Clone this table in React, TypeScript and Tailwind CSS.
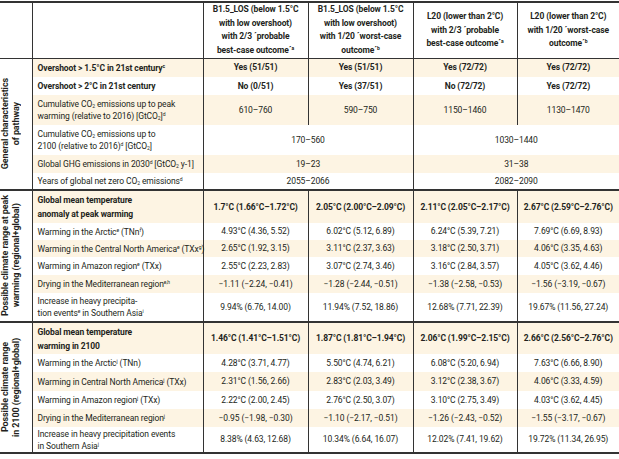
import React from 'react';

type Row = {
  label: React.ReactNode;
  vals: string[];
  bold?: boolean;
  beige?: boolean;
  h: string;
  merged?: boolean;
};

const sup = (s: string) => <sup className="text-[5px] -top-[3px]">{s}</sup>;
const co2 = <>CO<sub className="text-[5px]">2</sub></>;

const block1: Row[] = [
  { label: <>Overshoot &gt; 1.5°C in 21st century{sup('c')}</>, vals: ['Yes (51/51)', 'Yes (51/51)', 'Yes (72/72)', 'Yes (72/72)'], bold: true, beige: true, h: 'h-[19px]' },
  { label: 'Overshoot > 2°C in 21st century', vals: ['No (0/51)', 'Yes (37/51)', 'No (72/72)', 'Yes (72/72)'], bold: true, h: 'h-[18px]' },
  { label: <>Cumulative {co2} emissions up to peak<br />warming (relative to 2016) [Gt{co2}]{sup('d')}</>, vals: ['610–760', '590–750', '1150–1460', '1130–1470'], beige: true, h: 'h-[30px]' },
  { label: <>Cumulative {co2} emissions up to<br />2100 (relative to 2016){sup('d')} [Gt{co2}]</>, vals: ['170–560', '1030–1440'], merged: true, h: 'h-[30px]' },
  { label: <>Global GHG emissions in 2030{sup('d')} [Gt{co2} y-1]</>, vals: ['19–23', '31–38'], merged: true, beige: true, h: 'h-[18px]' },
  { label: <>Years of global net zero {co2} emissions{sup('d')}</>, vals: ['2055–2066', '2082–2090'], merged: true, h: 'h-[17px]' },
];

const block2: Row[] = [
  { label: <>Global mean temperature<br />anomaly at peak warming</>, vals: ['1.7°C (1.66°C–1.72°C)', '2.05°C (2.00°C–2.09°C)', '2.11°C (2.05°C–2.17°C)', '2.67°C (2.59°C–2.76°C)'], bold: true, beige: true, h: 'h-[33px]' },
  { label: <>Warming in the Arctic{sup('e')} (TNn{sup('f')})</>, vals: ['4.93°C (4.36, 5.52)', '6.02°C (5.12, 6.89)', '6.24°C (5.39, 7.21)', '7.69°C (6.69, 8.93)'], h: 'h-[17px]' },
  { label: <>Warming in the Central North America{sup('e')} (TXx{sup('g')})</>, vals: ['2.65°C (1.92, 3.15)', '3.11°C (2.37, 3.63)', '3.18°C (2.50, 3.71)', '4.06°C (3.35, 4.63)'], beige: true, h: 'h-[17px]' },
  { label: <>Warming in Amazon region{sup('e')} (TXx)</>, vals: ['2.55°C (2.23, 2.83)', '3.07°C (2.74, 3.46)', '3.16°C (2.84, 3.57)', '4.05°C (3.62, 4.46)'], h: 'h-[18px]' },
  { label: <>Drying in the Mediterranean region{sup('e,h')}</>, vals: ['−1.11 (−2.24, −0.41)', '−1.28 (−2.44, −0.51)', '−1.38 (−2.58, −0.53)', '−1.56 (−3.19, −0.67)'], beige: true, h: 'h-[18px]' },
  { label: <>Increase in heavy precipita-<br />tion events{sup('e')} in Southern Asia{sup('i')}</>, vals: ['9.94% (6.76, 14.00)', '11.94% (7.52, 18.86)', '12.68% (7.71, 22.39)', '19.67% (11.56, 27.24)'], h: 'h-[29px]' },
];

const block3: Row[] = [
  { label: <>Global mean temperature<br />warming in 2100</>, vals: ['1.46°C (1.41°C–1.51°C)', '1.87°C (1.81°C–1.94°C)', '2.06°C (1.99°C–2.15°C)', '2.66°C (2.56°C–2.76°C)'], bold: true, beige: true, h: 'h-[32px]' },
  { label: <>Warming in the Arctic{sup('j')} (TNn)</>, vals: ['4.28°C (3.71, 4.77)', '5.50°C (4.74, 6.21)', '6.08°C (5.20, 6.94)', '7.63°C (6.66, 8.90)'], h: 'h-[18px]' },
  { label: <>Warming in Central North America{sup('j')} (TXx)</>, vals: ['2.31°C (1.56, 2.66)', '2.83°C (2.03, 3.49)', '3.12°C (2.38, 3.67)', '4.06°C (3.33, 4.59)'], beige: true, h: 'h-[19px]' },
  { label: <>Warming in Amazon region{sup('j')} (TXx)</>, vals: ['2.22°C (2.00, 2.45)', '2.76°C (2.50, 3.07)', '3.10°C (2.75, 3.49)', '4.03°C (3.62, 4.45)'], h: 'h-[18px]' },
  { label: <>Drying in the Mediterranean region{sup('j')}</>, vals: ['−0.95 (−1.98, −0.30)', '−1.10 (−2.17, −0.51)', '−1.26 (−2.43, −0.52)', '−1.55 (−3.17, −0.67)'], beige: true, h: 'h-[18px]' },
  { label: <>Increase in heavy precipitation events<br />in Southern Asia{sup('j')}</>, vals: ['8.38% (4.63, 12.68)', '10.34% (6.64, 16.07)', '12.02% (7.41, 19.62)', '19.72% (11.34, 26.95)'], h: 'h-[26px]' },
];

function Block({ rows, title }: { rows: Row[]; title: React.ReactNode }) {
  return (
    <tbody className="border-b-2 border-[#333]">
      {rows.map((r, i) => (
        <tr key={i} className={`${r.h} ${r.beige ? 'bg-[#fdf4e3]' : 'bg-white'}`}>
          {i === 0 && (
            <td rowSpan={rows.length} className="bg-white border-r border-[#333] p-0 text-center align-middle">
              <div className="[writing-mode:vertical-rl] rotate-180 mx-auto font-bold text-[9px] leading-[11px] whitespace-nowrap">{title}</div>
            </td>
          )}
          <td className={`border-r border-[#333] pl-[5px] pr-0 py-0 align-middle text-left leading-[12px] whitespace-nowrap ${r.bold ? 'font-bold leading-[14px]' : ''}`}>{r.label}</td>
          {r.merged
            ? r.vals.map((v, j) => (
                <td key={j} colSpan={2} className={`text-center align-middle whitespace-nowrap ${j === 0 ? 'border-r border-[#333]' : ''}`}>{v}</td>
              ))
            : r.vals.map((v, j) => (
                <td key={j} className={`text-center align-middle whitespace-nowrap ${j < 3 ? 'border-r border-[#333]' : ''} ${r.bold ? 'font-bold' : ''}`}>{v}</td>
              ))}
        </tr>
      ))}
    </tbody>
  );
}

export default function App() {
  return (
    <div className="w-[619px] h-[459px] bg-white overflow-hidden text-[#231f20] text-[8.5px] tracking-[-0.1px]" style={{ fontFamily: 'Roboto, "Liberation Sans", sans-serif' }}>
      <div className="h-[1px]" />
      <table className="table-fixed border-collapse w-[619px]">
        <colgroup>
          <col className="w-[32px]" />
          <col className="w-[171px]" />
          <col className="w-[105px]" />
          <col className="w-[105px]" />
          <col className="w-[104px]" />
          <col className="w-[102px]" />
        </colgroup>
        <thead>
          <tr className="h-[56px] border-t-2 border-b border-[#333]">
            <th className="border-r border-[#333]" />
            <th className="border-r border-[#333]" />
            <th className="border-r border-[#333] font-bold text-center align-middle leading-[13.5px] whitespace-nowrap">B1.5_LOS (below 1.5°C<br />with low overshoot)<br />with 2/3 ´probable<br />best-case outcome´{sup('a')}</th>
            <th className="border-r border-[#333] font-bold text-center align-middle leading-[13.5px] whitespace-nowrap">B1.5_LOS (below 1.5°C<br />with low overshoot)<br />with 1/20 ´worst-case<br />outcome´{sup('b')}</th>
            <th className="border-r border-[#333] font-bold text-center align-middle leading-[13.5px] whitespace-nowrap">L20 (lower than 2°C)<br />with 2/3 ´probable<br />best-case outcome´{sup('a')}</th>
            <th className="font-bold text-center align-middle leading-[13.5px] whitespace-nowrap">L20 (lower than 2°C)<br />with 1/20 ´worst-case<br />outcome´{sup('b')}</th>
          </tr>
        </thead>
        <Block rows={block1} title={<>General characteristics<br />of pathway</>} />
        <Block rows={block2} title={<>Possible climate range at peak<br />warming (regional+global)</>} />
        <Block rows={block3} title={<>Possible climate range<br />in 2100 (regional+global)</>} />
      </table>
    </div>
  );
}
